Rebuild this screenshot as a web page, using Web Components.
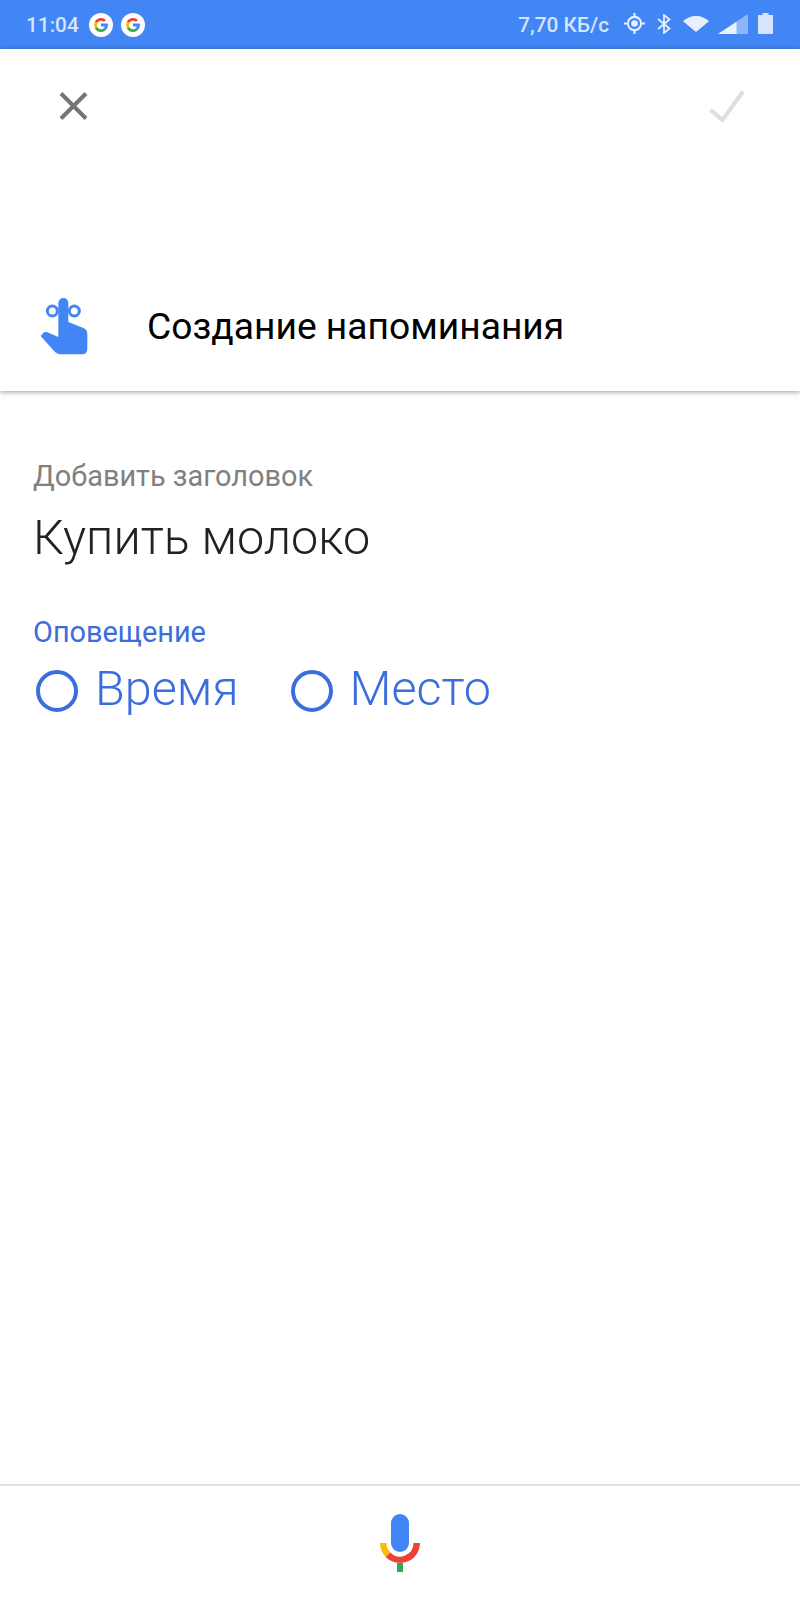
<!DOCTYPE html>
<html lang="ru">
<head>
<meta charset="utf-8">
<title>Создание напоминания</title>
<style>
  html, body { margin: 0; padding: 0; background: #fff; }
  body { font-family: Roboto, "Noto Sans", sans-serif; }
</style>
</head>
<body>
<reminder-app></reminder-app>

<script>
const G_ICON = `
  <svg class="g" width="24" height="24" viewBox="1 1 24 24" fill="none" stroke-width="2.8">
    <circle cx="13" cy="13" r="12" fill="#fff"/>
    <path d="M16.960 9.040A5.600 5.600 0 0 0 8.010 10.460" stroke="#ea4335"/>
    <path d="M8.010 10.460A5.600 5.600 0 0 0 8.010 15.540" stroke="#fbbc05"/>
    <path d="M8.010 15.540A5.600 5.600 0 0 0 16.960 16.960" stroke="#34a853"/>
    <path d="M16.960 16.960A5.600 5.600 0 0 0 18.600 13H13" stroke="#4285f4"/>
  </svg>`;

// Top system bar with clock and indicators
class StatusBar extends HTMLElement {
  constructor() {
    super();
    this.attachShadow({ mode: 'open' });
  }

  connectedCallback() {
    this.shadowRoot.innerHTML = `
      <style>
        :host {
          display: flex;
          align-items: center;
          height: 49px;
          padding: 0 27px 0 26px;
          background: #4285f4;
          color: #d6e4fd;
          font: 500 20.800px Roboto, sans-serif;
        }
        .left, .right { display: flex; align-items: center; }
        .g { margin-left: 8px; }
        .time { margin-right: 2px; }
        .right { margin-left: auto; }
        .right svg { margin-bottom: 2px; }
        .speed { margin-right: 15px; font-size: 20.800px; }
        svg { display: block; }
      </style>
      <div class="left">
        <span class="time">11:04</span>
        ${G_ICON}${G_ICON}
      </div>
      <div class="right">
        <span class="speed">7,70 КБ/с</span>
        <svg width="21" height="21" viewBox="0 0 24 24" fill="none" stroke="#e8f0fe">
          <circle cx="12" cy="12" r="7.600" stroke-width="2.400"/>
          <circle cx="12" cy="12" r="3.800" fill="#e8f0fe" stroke="none"/>
          <path d="M12 0v4.400M12 19.600V24M0 12h4.400M19.600 12H24" stroke-width="2.400"/>
        </svg>
        <svg style="margin-left:12px" width="14" height="20" viewBox="0 0 14 20" fill="none" stroke="#e8f0fe" stroke-width="1.800">
          <path d="M1 5 12.500 14.500 7 19V1L12.500 5.500 1 15"/>
        </svg>
        <svg style="margin-left:12px" width="26" height="16" viewBox="0 0 26 16">
          <path d="M0 5.200C3.400 2 8 0 13 0s9.600 2 13 5.200L13 16z" fill="#e8f0fe"/>
        </svg>
        <svg style="margin-left:9px" width="30" height="20" viewBox="0 0 30 20">
          <path d="M0 20 30 0v20z" fill="#8fb5f9"/>
          <path d="M0 20 18.500 7.700V20z" fill="#e8f0fe"/>
        </svg>
        <svg style="margin-left:10px" width="15" height="21" viewBox="0 0 15 21">
          <path d="M0 2h4.500V0h6v2H15V21H0z" fill="#d6e4fd"/>
        </svg>
      </div>
    `;
  }
}

// White card: close/confirm buttons and the title line
class ReminderHeader extends HTMLElement {
  constructor() {
    super();
    this.attachShadow({ mode: 'open' });
  }

  connectedCallback() {
    this.shadowRoot.innerHTML = `
      <style>
        :host {
          display: block;
          height: 342px;
          background: #fff;
          box-shadow: 0 1px 5px rgba(0,0,0,0.4);
          position: relative;
        }
        .actions {
          display: flex;
          justify-content: space-between;
          padding: 41px 55px 0 59px;
          height: 32px;
        }
        .title-row {
          display: flex;
          align-items: center;
          margin-top: 175px;
          padding-left: 40px;
          height: 58px;
        }
        .title-row span {
          margin-left: 59px;
          font: 400 37.200px Roboto, sans-serif;
          color: #000;
        }
        svg { display: block; }
      </style>
      <div class="actions">
        <svg width="29" height="32" viewBox="0 0 29 32" stroke="#757575" stroke-width="4" fill="none">
          <path d="M2 3.500 27 28.500M27 3.500 2 28.500"/>
        </svg>
        <svg width="36" height="32" viewBox="0 0 36 32" stroke="#dedede" stroke-width="4" fill="none">
          <path d="M1.500 20 13.500 30 34 1.500"/>
        </svg>
      </div>
      <div class="title-row">
        <svg width="48" height="58" viewBox="58 50 144 174" fill="#4285f4">
          <circle cx="95" cy="92" r="15" fill="none" stroke="#4285f4" stroke-width="9"/>
          <circle cx="161" cy="92" r="15" fill="none" stroke="#4285f4" stroke-width="9"/>
          <path d="M113 68a15 15 0 0 1 30 0V125L188 143Q200 148 200 160V205Q200 222 183 222H120Q110 222 103 215L60 167L68 158Q72 154 80 156L113 170Z"/>
        </svg>
        <span>Создание напоминания</span>
      </div>
    `;
  }
}

// Form body. Title and radio options come through slots
class ReminderForm extends HTMLElement {
  constructor() {
    super();
    this.attachShadow({ mode: 'open' });
  }

  connectedCallback() {
    this.shadowRoot.innerHTML = `
      <style>
        :host {
          display: block;
          flex: 1;
          padding: 69px 33px 0;
          font-family: Roboto, sans-serif;
        }
        .hint { font-size: 28.900px; line-height: 32px; color: #808080; }
        .value { font-size: 48.500px; font-weight: 300; line-height: 56px; color: #212121; margin-top: 18px; }
        .label { font-size: 28.900px; line-height: 32px; color: #3b6ddc; margin-top: 50px; }
        .options { display: flex; gap: 49px; margin-top: 13px; }
      </style>
      <div class="hint">Добавить заголовок</div>
      <div class="value"><slot name="title"></slot></div>
      <div class="label">Оповещение</div>
      <div class="options"><slot></slot></div>
    `;
  }
}

class RadioOption extends HTMLElement {
  constructor() {
    super();
    this.attachShadow({ mode: 'open' });
  }

  connectedCallback() {
    this.shadowRoot.innerHTML = `
      <style>
        :host {
          display: flex;
          align-items: center;
          color: #3b6ddc;
          font: 300 48.500px/56px Roboto, sans-serif;
        }
        .ring {
          width: 42px;
          height: 42px;
          box-sizing: border-box;
          border: 4.500px solid #3b6ddc;
          border-radius: 50%;
          margin: 3px 17px 0 3px;
        }
      </style>
      <div class="ring"></div>
      <slot></slot>
    `;
  }
}

// Bottom bar with the assistant mic
class VoiceBar extends HTMLElement {
  constructor() {
    super();
    this.attachShadow({ mode: 'open' });
  }

  connectedCallback() {
    this.shadowRoot.innerHTML = `
      <style>
        :host {
          display: flex;
          justify-content: center;
          height: 116px;
          border-top: 2px solid #e2e2e2;
          box-sizing: border-box;
          padding-top: 28px;
        }
        svg { display: block; }
      </style>
      <svg width="40" height="58" viewBox="0 0 40 58" fill="none">
        <rect x="11" y="0" width="18" height="38" rx="9" fill="#4285f4"/>
        <path d="M3.250 29a16.750 16.750 0 0 0 4.800 11.700" stroke="#fbbc05" stroke-width="6.500"/>
        <path d="M8.050 40.700A16.750 16.750 0 0 0 36.750 29" stroke="#ea4335" stroke-width="6.500"/>
        <rect x="17" y="49" width="6" height="9" fill="#34a853"/>
      </svg>
    `;
  }
}

class ReminderApp extends HTMLElement {
  constructor() {
    super();
    this.attachShadow({ mode: 'open' });
  }

  connectedCallback() {
    this.shadowRoot.innerHTML = `
      <style>
        :host {
          display: flex;
          flex-direction: column;
          width: 800px;
          height: 1600px;
          overflow: hidden;
          background: #fff;
        }
      </style>
      <status-bar></status-bar>
      <reminder-header></reminder-header>
      <reminder-form>
        <span slot="title">Купить молоко</span>
        <radio-option>Время</radio-option>
        <radio-option>Место</radio-option>
      </reminder-form>
      <voice-bar></voice-bar>
    `;
  }
}

customElements.define('status-bar', StatusBar);
customElements.define('reminder-header', ReminderHeader);
customElements.define('reminder-form', ReminderForm);
customElements.define('radio-option', RadioOption);
customElements.define('voice-bar', VoiceBar);
customElements.define('reminder-app', ReminderApp);
</script>
</body>
</html>
